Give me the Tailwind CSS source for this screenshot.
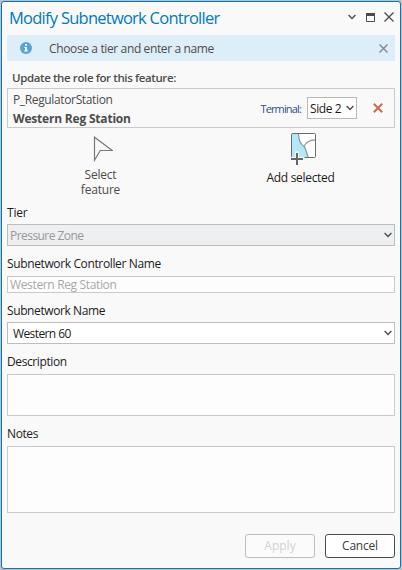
<!DOCTYPE html>
<html lang="en">
<head>
<meta charset="utf-8">
<title>Modify Subnetwork Controller</title>
<script src="https://cdn.jsdelivr.net/npm/@tailwindcss/browser@4"></script>
</head>
<body class="bg-[#c4bfbe]">
<div class="w-[402px] h-[570px] p-px overflow-hidden font-['Open_Sans','Noto_Sans',sans-serif] text-[12px] leading-4 text-[#1c1c1c] whitespace-nowrap">
  <main class="w-[400px] h-[568px] border border-[#0079c1] rounded-[3px] bg-[#f9f9f9] px-[5px] flex flex-col">
    <header class="h-[33px] shrink-0 flex items-center justify-between">
      <h1 class="text-[16.5px] leading-[22px] tracking-[-0.75px] text-[#0079c1] pl-[2px] -mt-[2px]">Modify Subnetwork Controller</h1>
      <div class="flex items-center gap-[10px] text-[#4c4c4c] pb-[3px]">
        <svg class="w-2 h-[6px]" viewBox="0 0 8 6" fill="none" stroke="currentColor" stroke-width="1.4"><path d="M.6 1 4 4.4 7.4 1"/></svg>
        <svg class="w-[9px] h-[9px]" viewBox="0 0 9 9" fill="none" stroke="currentColor"><path d="M.5.5h8v8h-8z"/><path d="M0 1.5h9" stroke-width="3"/></svg>
        <svg class="w-[10px] h-[10px] -ml-[1px] mr-px" viewBox="0 0 10 10" fill="none" stroke="currentColor" stroke-width="1.3"><path d="M.5.5l9 9M9.500.5l-9 9"/></svg>
      </div>
    </header>

    <section class="w-[388px] h-[26px] shrink-0 bg-[#deeef9] flex items-center text-[#4c4c4c]">
      <svg class="w-3 h-3 ml-[13px]" viewBox="0 0 12 12"><circle cx="6" cy="6" r="6" fill="#56a5d8"/><path d="M5 2h2v1.700H5zM4.300 5H7v3.500h.8v1H4.200v-1H5V6h-.7z" fill="#fff"/></svg>
      <span class="ml-[17px] pt-px tracking-[-0.37px]">Choose a tier and enter a name</span>
      <svg class="w-[9px] h-[9px] ml-auto mr-[7px]" viewBox="0 0 9 9" fill="none" stroke="#85888b" stroke-width="1.4"><path d="M.5.5l8 8M8.500.5l-8 8"/></svg>
    </section>

    <p class="mt-[9px] ml-[5px] mb-[2px] font-semibold text-[#4c4c4c] text-[11.500px] tracking-[-0.39px]">Update the role for this feature:</p>

    <section class="w-[388px] h-10 shrink-0 border border-[#cacaca] flex items-center text-[#4c4c4c]">
      <div class="pl-[5px] pt-px leading-[19px]">
        <div class="tracking-[-0.36px]">P_RegulatorStation</div>
        <div class="font-bold tracking-[-0.2px]">Western Reg Station</div>
      </div>
      <span class="ml-auto pt-px text-[11px] tracking-[-0.85px] text-[#2c4f86]">Terminal:</span>
      <div class="ml-[6px] w-[50px] h-[22px] border border-[#b8b8b8] bg-white flex items-center justify-between pl-[2px] pr-[2px] text-[#1c1c1c]">
        <span class="tracking-[-0.4px] pt-px">Side 2</span>
        <svg class="w-2 h-[6px]" viewBox="0 0 8 6" fill="none" stroke="#4c4c4c" stroke-width="1.4"><path d="M.6 1 4 4.400 7.400 1"/></svg>
      </div>
      <svg class="w-[10px] h-[10px] ml-4 mr-[11px]" viewBox="0 0 10 10" fill="none" stroke="#cd6b4e" stroke-width="2"><path d="M.8.8l8.400 8.400M9.200.8.8 9.200"/></svg>
    </section>

    <section class="h-[76px] shrink-0 flex">
      <div class="w-[187px] flex flex-col items-center pt-[8px] text-[#4c4c4c]">
        <svg class="w-[20px] h-[26px] ml-[5px]" viewBox="0 0 20 26" fill="none" stroke="#77787b" stroke-width="1.2"><path d="M1.500 1.200v23l5.800-9.700h12z"/></svg>
        <div class="mt-[5px] text-center leading-[15px] tracking-[-0.2px]">Select<br>feature</div>
      </div>
      <div class="w-[200px] flex flex-col items-center pt-[5px]">
        <svg class="w-[26px] h-[33px] ml-[19px]" viewBox="0 0 26 33" fill="none"><rect x=".5" y=".5" width="24" height="24" rx="1" fill="#fff"/><path d="M1 1h6.500c.5 6 1 9 5.500 12.500 2.500 2.500 2.500 8 4.500 11H1z" fill="#b2e8fa"/><path d="M7.500 1c.5 6 1 9 5.500 12.500 2.500 2.500 2.500 8 4.500 11M13 13.500C14.500 9.500 19 7 24.500 6.800" stroke="#8b989e" stroke-width="1.200"/><rect x=".5" y=".5" width="24" height="24" rx="1" stroke="#6b6b6b"/><path d="M6 18.500v14M-.5 26h14" stroke="#f9f9f9" stroke-width="4"/><path d="M6 20v12M0 26h12" stroke="#666" stroke-width="2"/></svg>
        <div class="ml-[13px] mt-[4px] tracking-[-0.3px]">Add selected</div>
      </div>
    </section>

    <section class="w-[388px] shrink-0 flex flex-col">
      <label class="mt-px mb-[3px] tracking-[-0.2px]">Tier</label>
      <div class="h-[22px] border border-[#bdbdbf] bg-[#eeeff1] flex items-center justify-between pl-[2px] pr-[2px] text-[#989898]">
        <span class="tracking-[-0.55px] pt-[2px]">Pressure Zone</span>
        <svg class="w-2 h-[6px]" viewBox="0 0 8 6" fill="none" stroke="#4c4c4c" stroke-width="1.4"><path d="M.6 1 4 4.400 7.400 1"/></svg>
      </div>

      <label class="mt-[10px] mb-[4px] tracking-[-0.37px]">Subnetwork Controller Name</label>
      <div class="h-[17px] border border-[#cacaca] bg-[#fdfdfd] flex items-center pl-[2px] text-[#a8a8a8] tracking-[-0.35px]">Western Reg Station</div>

      <label class="mt-[10px] mb-[3px] tracking-[-0.4px]">Subnetwork Name</label>
      <div class="h-[22px] border border-[#bdbdbf] bg-white flex items-center justify-between pl-[5px] pr-[2px]">
        <span class="tracking-[-0.6px] pt-[2px]">Western 60</span>
        <svg class="w-2 h-[6px]" viewBox="0 0 8 6" fill="none" stroke="#4c4c4c" stroke-width="1.4"><path d="M.6 1 4 4.400 7.400 1"/></svg>
      </div>

      <label class="mt-[10px] mb-[4px] tracking-[-0.4px]">Description</label>
      <div class="h-[42px] border border-[#cacaca] bg-[#fdfdfd]"></div>

      <label class="mt-[10px] mb-[4px] tracking-[-0.4px]">Notes</label>
      <div class="h-[67px] border border-[#cacaca] bg-[#fdfdfd]"></div>
    </section>

    <footer class="w-[388px] mt-[21px] flex justify-end gap-[10px]">
      <button class="w-[70px] h-6 border border-[#bdbdbd] rounded-[3px] bg-[#fbfbfb] text-[#d2d2d2]">Apply</button>
      <button class="w-[70px] h-6 border border-[#4c4c4c] rounded-[3px] bg-white text-[#3c3c3c] tracking-[-0.2px]">Cancel</button>
    </footer>
  </main>
</div>
</body>
</html>
